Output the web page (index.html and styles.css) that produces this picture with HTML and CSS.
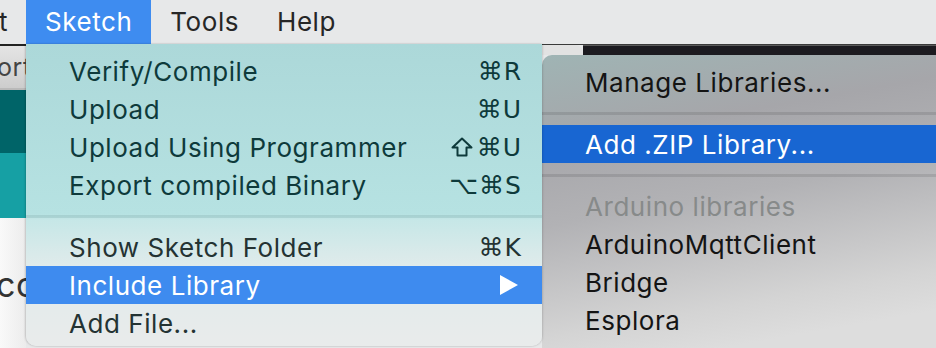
FILE: index.html
```html
<!DOCTYPE html>
<html lang="en">
<head>
    <meta charset="UTF-8">
    <meta name="viewport" content="width=device-width, initial-scale=1.0">
    <title>Sketch menu</title>
    <link rel="stylesheet" href="styles.css">
</head>
<body>
    <div class="menubar">
        <div class="menubar-item cut"><span>t</span></div>
        <div class="menubar-item active">Sketch</div>
        <div class="menubar-item">Tools</div>
        <div class="menubar-item">Help</div>
    </div>

    <div class="desk">
        <div class="bg-window">
            <div class="bg-toolbar"><span class="bg-label">ort</span></div>
            <div class="bg-band dark"></div>
            <div class="bg-band light"></div>
            <div class="bg-editor"><span class="bg-code">cc</span></div>
        </div>

        <div class="sketch-menu">
            <div class="menu-group">
                <div class="menu-item"><span>Verify/Compile</span><span class="shortcut">⌘R</span></div>
                <div class="menu-item"><span>Upload</span><span class="shortcut">⌘U</span></div>
                <div class="menu-item"><span>Upload Using Programmer</span>
                    <span class="shortcut">
                        <svg class="shift" width="22" height="20" viewBox="0 0 22 20"><polygon points="11,1.5 20.5,10.5 15.5,10.5 15.5,18.5 6.5,18.5 6.5,10.5 1.5,10.5" fill="none" stroke="currentColor" stroke-width="2" stroke-linejoin="round"/></svg>⌘U
                    </span>
                </div>
                <div class="menu-item"><span>Export compiled Binary</span><span class="shortcut">⌥⌘S</span></div>
            </div>
            <div class="separator"></div>
            <div class="menu-group lower">
                <div class="menu-item"><span>Show Sketch Folder</span><span class="shortcut">⌘K</span></div>
                <div class="menu-item selected"><span>Include Library</span>
                    <svg class="arrow" width="18" height="20" viewBox="0 0 18 20"><polygon points="0,0 18,10 0,20" fill="#fff"/></svg>
                </div>
                <div class="menu-item"><span>Add File...</span></div>
            </div>
        </div>

        <div class="side">
            <div class="side-strip">
                <div class="side-tab"></div>
                <div class="side-bar"></div>
            </div>
            <div class="submenu">
                <div class="menu-item">Manage Libraries...</div>
                <div class="separator"></div>
                <div class="menu-item selected deep">Add .ZIP Library...</div>
                <div class="separator"></div>
                <div class="menu-item disabled">Arduino libraries</div>
                <div class="menu-item">ArduinoMqttClient</div>
                <div class="menu-item">Bridge</div>
                <div class="menu-item">Esplora</div>
                <div class="menu-item">Ethernet</div>
            </div>
        </div>
    </div>
</body>
</html>
```

FILE: styles.css
```css
body {
    margin: 0;
    width: 936px;
    height: 348px;
    overflow: hidden;
    font-family: "Inter", "DejaVu Sans", sans-serif;
    font-size: 26px;
    letter-spacing: 0.55px;
    background: #e7e8e9;
}

/* top menu bar */
.menubar {
    height: 44px;
    display: flex;
    background: #e7e8e9;
    color: #262626;
}

.menubar-item {
    padding: 0 19px;
    line-height: 44px;
}

.menubar-item.cut {
    width: 26px;
    padding: 0 18px 0 0;
    box-sizing: border-box;
    display: flex;
    justify-content: flex-end;
    overflow: hidden;
}

.menubar-item.active {
    background: #3e8cf0;
    color: #fff;
}

.desk {
    display: flex;
    height: 304px;
}

/* window behind the menus */
.bg-window {
    width: 26px;
    display: flex;
    flex-direction: column;
    border-top: 2px solid #222;
    overflow: hidden;
}

.bg-toolbar {
    height: 42px;
    background: linear-gradient(#e4e4e4, #cdcdcd);
    border-bottom: 2px solid #b9b9b9;
    line-height: 42px;
    font-size: 25px;
    color: #444;
}

.bg-label {
    display: block;
    margin-left: -3px;
}

.bg-band.dark {
    height: 63px;
    background: #006468;
}

.bg-band.light {
    height: 65px;
    background: #16a0a4;
}

.bg-editor {
    flex: 1;
    background: linear-gradient(90deg, #f9f9f9, #ececec);
    font-size: 34px;
    color: #333;
    padding-top: 46px;
}

.bg-code {
    display: block;
    margin-left: -4px;
}

/* Sketch menu */
.sketch-menu {
    width: 516px;
    height: 302px;
    padding-top: 8px;
    box-sizing: border-box;
    background: linear-gradient(180deg,
        #acd8d9 0px,
        #b6e2e2 170px,
        #c6e7e7 176px,
        #e0ebeb 222px,
        #e9ebeb 302px
    );
    border-bottom-left-radius: 10px;
    border-bottom-right-radius: 10px;
    box-shadow: -1px 0 2px rgba(0, 0, 0, 0.18), 1px 0 2px rgba(0, 0, 0, 0.12);
    color: #0e3a3b;
    position: relative;
    z-index: 1;
}

.menu-group.lower {
    color: #243333;
}

.menu-item {
    height: 38px;
    display: flex;
    align-items: center;
    justify-content: space-between;
    padding: 0 20px 0 43px;
    white-space: nowrap;
}

.menu-item.selected {
    background: #3e8bef;
    color: #fff;
}

.shortcut {
    display: flex;
    align-items: center;
    font-family: "DejaVu Sans", sans-serif;
    font-size: 25px;
    letter-spacing: 1px;
}

.shift {
    margin-right: 4px;
}

.arrow {
    margin-right: 4px;
}

.separator {
    height: 24px;
    display: flex;
    align-items: center;
}

.separator::after {
    content: "";
    flex: 1;
    height: 3px;
    background: rgba(0, 60, 60, 0.1);
}

/* Include Library submenu */
.side {
    flex: 1;
    display: flex;
    flex-direction: column;
}

.side-strip {
    height: 11px;
    display: flex;
    border-top: 1px solid #3a3a3a;
    box-sizing: border-box;
}

.side-tab {
    width: 41px;
    background: #e2e2e2;
    border-top-right-radius: 8px;
}

.side-bar {
    flex: 1;
    background: #1c1b20;
    border-top: 1px solid #5a5a5a;
}

.submenu {
    flex: 1;
    padding-top: 8px;
    background: linear-gradient(170deg,
        #9fb4b4 0px,
        #a6a6aa 90px,
        #b2b2b5 170px,
        #d4d4d4 280px,
        #dddddd 320px
    );
    border-top-left-radius: 10px;
    color: #141414;
    overflow: hidden;
}

.submenu .separator::after {
    background: rgba(0, 0, 0, 0.1);
}

.submenu .menu-item.deep {
    background: #1866d2;
}

.submenu .menu-item.disabled {
    color: #878a8a;
}
```
